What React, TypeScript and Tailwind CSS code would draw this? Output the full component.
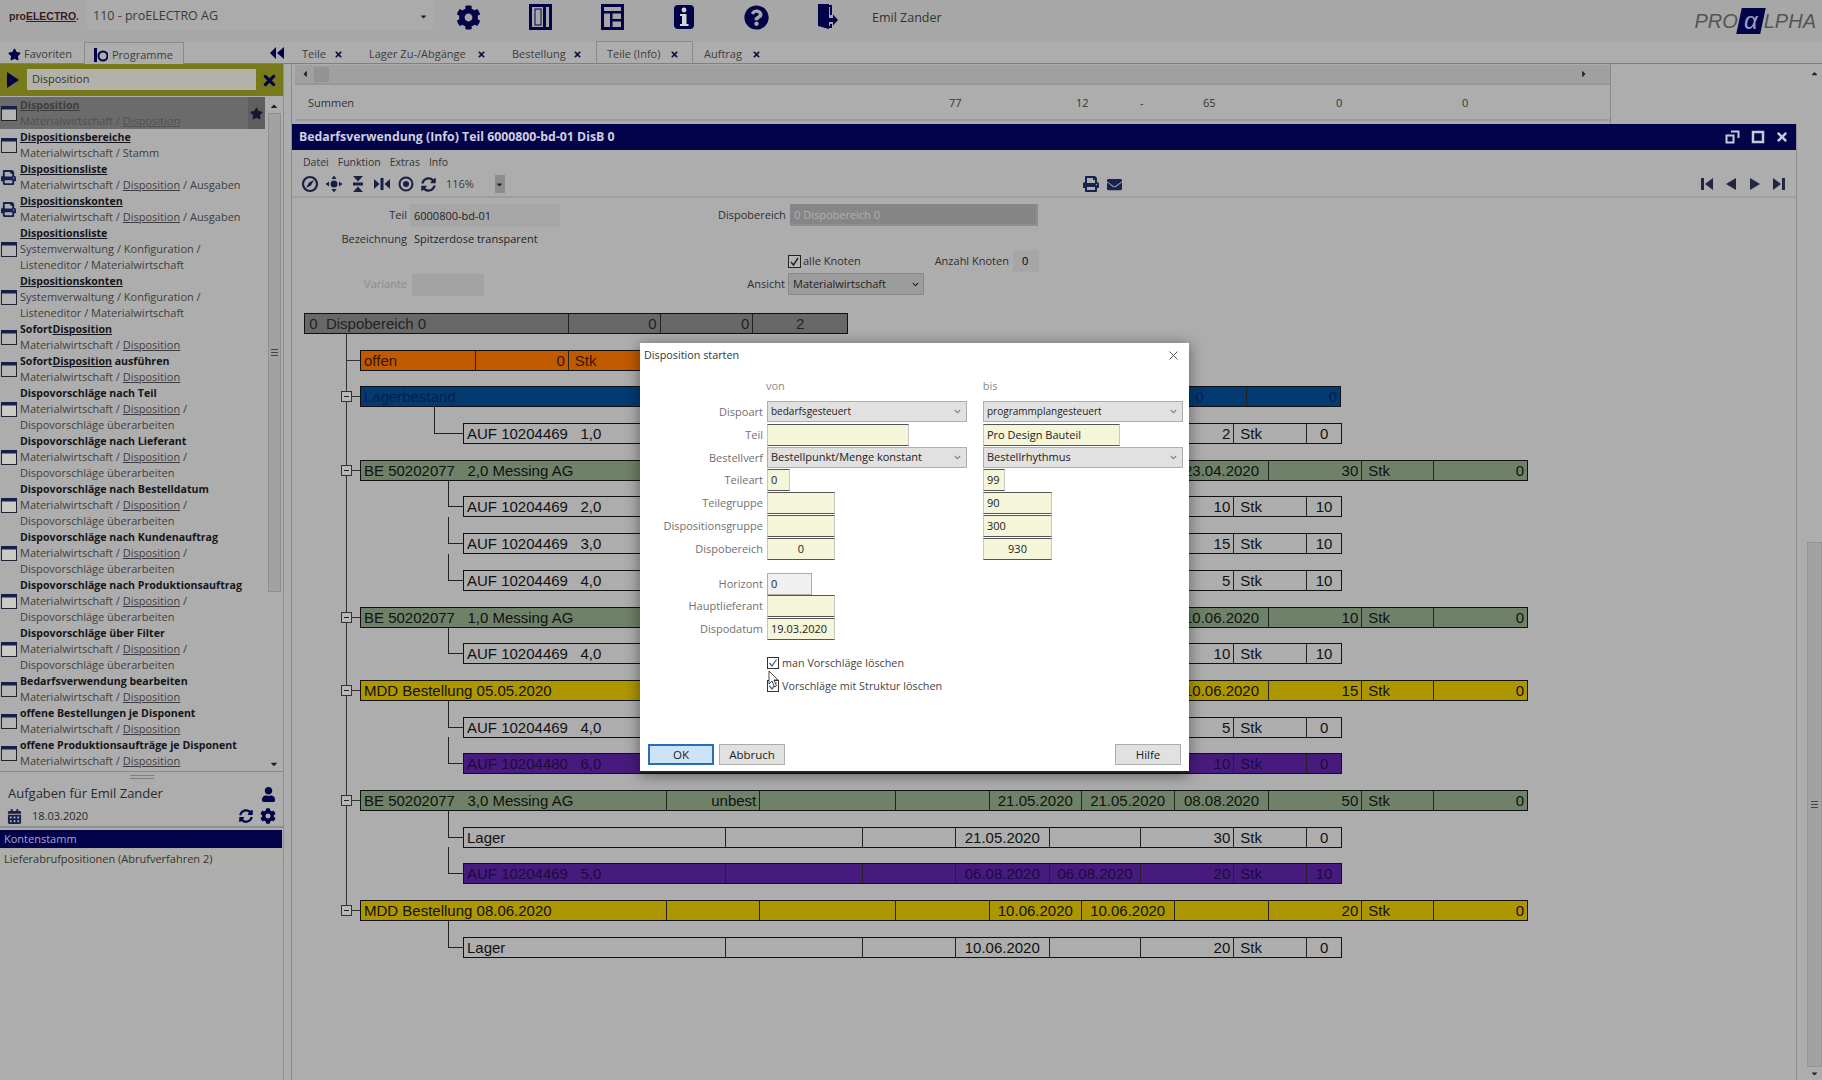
import React from "react";
import { FaCog, FaQuestionCircle, FaStar, FaTimes, FaUser, FaCalendarAlt, FaSyncAlt, FaPrint, FaEnvelope, FaCaretLeft, FaCaretRight, FaCaretDown, FaCaretUp, FaChevronDown } from "react-icons/fa";
import { X as LucideX } from "lucide-react";

const NAVY = "#03034a";

function U({ text }: { text: string }) {
  const parts = text.split(/(Disposition\w*)/);
  return (
    <>
      {parts.map((p, i) => (i % 2 === 1 ? <span key={i} className="underline">{p}</span> : <React.Fragment key={i}>{p}</React.Fragment>))}
    </>
  );
}

function WinIcon({ kind }: { kind: string }) {
  if (kind === "print") return <FaPrint className="text-[#15204f]" size={15} />;
  return (
    <svg width="16" height="15" viewBox="0 0 16 15">
      <rect x="0.5" y="0.5" width="15" height="14" fill={kind === "tint" ? "#c9cbc4" : "#b4b4b4"} stroke="#20232f" />
      <rect x="0" y="0" width="16" height="3.5" fill="#14204a" />
    </svg>
  );
}

const items: { t: string; l: string[]; k: string; sel?: boolean }[] = [
  { t: "Disposition", l: ["Materialwirtschaft / Disposition"], k: "win", sel: true },
  { t: "Dispositionsbereiche", l: ["Materialwirtschaft / Stamm"], k: "win" },
  { t: "Dispositionsliste", l: ["Materialwirtschaft / Disposition / Ausgaben"], k: "print" },
  { t: "Dispositionskonten", l: ["Materialwirtschaft / Disposition / Ausgaben"], k: "print" },
  { t: "Dispositionsliste", l: ["Systemverwaltung / Konfiguration /", "Listeneditor / Materialwirtschaft"], k: "win" },
  { t: "Dispositionskonten", l: ["Systemverwaltung / Konfiguration /", "Listeneditor / Materialwirtschaft"], k: "win" },
  { t: "SofortDisposition", l: ["Materialwirtschaft / Disposition"], k: "win" },
  { t: "SofortDisposition ausführen", l: ["Materialwirtschaft / Disposition"], k: "win" },
  { t: "Dispovorschläge nach Teil", l: ["Materialwirtschaft / Disposition /", "Dispovorschläge überarbeiten"], k: "tint" },
  { t: "Dispovorschläge nach Lieferant", l: ["Materialwirtschaft / Disposition /", "Dispovorschläge überarbeiten"], k: "tint" },
  { t: "Dispovorschläge nach Bestelldatum", l: ["Materialwirtschaft / Disposition /", "Dispovorschläge überarbeiten"], k: "tint" },
  { t: "Dispovorschläge nach Kundenauftrag", l: ["Materialwirtschaft / Disposition /", "Dispovorschläge überarbeiten"], k: "tint" },
  { t: "Dispovorschläge nach Produktionsauftrag", l: ["Materialwirtschaft / Disposition /", "Dispovorschläge überarbeiten"], k: "tint" },
  { t: "Dispovorschläge über Filter", l: ["Materialwirtschaft / Disposition /", "Dispovorschläge überarbeiten"], k: "tint" },
  { t: "Bedarfsverwendung bearbeiten", l: ["Materialwirtschaft / Disposition"], k: "win" },
  { t: "offene Bestellungen je Disponent", l: ["Materialwirtschaft / Disposition"], k: "win" },
  { t: "offene Produktionsaufträge je Disponent", l: ["Materialwirtschaft / Disposition"], k: "win" },
];

function Sidebar() {
  return (
    <div className="w-[292px] shrink-0 border-r border-[#8b8b8b]">
      <div className="w-[284px] h-full flex flex-col border-r border-[#8f8f8f]">
        <div className="w-[283px] h-[32px] bg-[#77791a] flex items-center">
          <svg width="14" height="18" viewBox="0 0 14 18" className="ml-[6px]"><path d="M1 1 L13 9 L1 17 Z" fill={NAVY} /></svg>
          <div className="ml-[7px] mb-[1px] w-[229px] h-[21px] bg-[#b2b2a8] text-[11px] leading-[20px] pl-[5px] text-[#333]">Disposition</div>
          <FaTimes className="ml-[5px]" size={17} color={NAVY} />
        </div>
        <div className="w-[283px] flex h-[675px] mt-[1px] border-b border-[#8a8a8a]">
          <div className="w-[265px] flex flex-col text-[11px] leading-[16px]">
            {items.map((it, i) => (
              <div key={i} className={"flex items-center relative " + (it.sel ? "bg-[#6b6b6b]" : "")}>
                <div className="w-[20px] pl-[1px] shrink-0 flex justify-start"><WinIcon kind={it.k} /></div>
                <div className="min-w-0 whitespace-nowrap">
                  <div className={"font-bold text-[10.6px] " + (it.sel ? "text-[#3e3e3e]" : "text-[#15151a]")}><U text={it.t} /></div>
                  {it.l.map((s, j) => (
                    <div key={j} className={it.sel ? "text-[#505050]" : "text-[#3d3d3d]"}><U text={s} /></div>
                  ))}
                </div>
                {it.sel && (
                  <div className="absolute right-0 top-0 h-full w-[17px] bg-[#5f5f5f] flex items-center justify-center">
                    <FaStar size={13} color="#17172e" />
                  </div>
                )}
              </div>
            ))}
          </div>
          <div className="w-[18px] flex flex-col items-center text-[#222]">
            <FaCaretUp size={10} className="mt-[4px]" />
            <div className="mt-[2px] w-[13px] h-[479px] bg-[#a2a2a2] border border-[#8f8f8f] flex items-center justify-center">
              <div className="w-[7px] h-[7px] border-y border-[#444] flex items-center"><div className="w-full h-px bg-[#444]" /></div>
            </div>
            <div className="flex-1" />
            <FaCaretDown size={10} className="mb-[2px]" />
          </div>
        </div>
        <div className="w-[283px] h-[10px] flex justify-center items-center">
          <div className="w-[24px] h-[4px] border-y border-[#7d7d7d]" />
        </div>
        <div className="w-[283px] h-[24px] flex items-center pl-[8px] pr-[7px] justify-between text-[13px] text-[#2a2a2a]">
          <span>Aufgaben für Emil Zander</span>
          <FaUser size={15} color={NAVY} />
        </div>
        <div className="w-[283px] h-[22px] flex items-center pl-[7px] pr-[7px] text-[11px] text-[#2a2a2a] border-b-2 border-[#8e8e8e]">
          <FaCalendarAlt size={15} color="#15204f" />
          <span className="ml-[10px]">18.03.2020</span>
          <div className="flex-1" />
          <FaSyncAlt size={14} color={NAVY} />
          <FaCog size={16} color={NAVY} className="ml-[7px]" />
        </div>
        <div className="w-[282px] h-[18px] mt-[2px] bg-[#03034a] text-[#a4a4dc] text-[11px] leading-[18px] pl-[4px]">Kontenstamm</div>
        <div className="w-[282px] h-[16px] mt-[3px] bg-[#afafa9] text-[#333] text-[11px] leading-[16px] pl-[4px] whitespace-nowrap">Lieferabrufpositionen (Abrufverfahren 2)</div>
      </div>
    </div>
  );
}

const GC = [0, 306, 399, 535, 629, 721, 814, 909, 1002, 1074, 1168];
const WC = [0, 262, 399, 492, 586, 678, 771, 844, 879];
const isDate = (s?: string) => !!s && /^\d\d\.\d\d\.\d{4}$/.test(s);

function Row({ left, width, bg, cols, texts, node, child, color = "#111", leftCols = [], centerCols = [] }: {
  left: number; width: number; bg: string; cols: number[]; texts: (string | undefined)[]; node?: boolean; child?: number; color?: string; leftCols?: number[]; centerCols?: number[];
}) {
  return (
    <div className="h-[21px] relative" style={{ marginLeft: left, width }}>
      {node && (
        <>
          <div className="absolute left-[-14px] top-[10px] w-[14px] h-px bg-[#333]" />
          <div className="absolute left-[-19px] top-[5px] w-[11px] h-[11px] border border-[#333] bg-[#b8b8b8] flex items-center justify-center">
            <div className="w-[5px] h-px bg-[#222]" />
          </div>
        </>
      )}
      {child !== undefined && (
        <>
          <div className="absolute top-[10px] h-px bg-[#222]" style={{ left: -child, width: child }} />
          <div className="absolute top-[-16px] h-[27px] w-px bg-[#222]" style={{ left: -child }} />
        </>
      )}
      <div className="flex h-full border border-[#111] text-[15px] leading-[19px] [font-family:'Liberation_Sans',sans-serif] whitespace-pre" style={{ background: bg, color }}>
        {cols.slice(0, -1).map((x, i) => {
          const wd = cols[i + 1] - x;
          const t = texts[i];
          const align = i === 0 ? "text-left" : t === "Stk" || leftCols.includes(i) ? "text-left pl-[6px]" : isDate(t) || wd < 60 || centerCols.includes(i) ? "text-center" : "text-right";
          return (
            <div key={i} className={"h-full overflow-hidden px-[3px] " + (i > 0 ? "border-l border-[#222] " : "") + align} style={{ width: wd }}>
              {t}
            </div>
          );
        })}
      </div>
    </div>
  );
}

const GREEN = "#6f8168";
const YEL = "#ad9600";
const PUR = "#471b7d";
const PLAIN = "#adadad";

function Tree() {
  const g = (a: string, d: string, q: string, z: string, d1 = "", d2 = "", mid = "") => [a, mid, "", "", d1, d2, d, q, "Stk", z];
  const w = (a: string, q: string, z: string, d1 = "", d2 = "") => [a, "", "", d1, d2, q, "Stk", z];
  const gc = { left: 56, width: 1168, cols: GC, node: true };
  const wc = { left: 159, width: 879, cols: WC };
  return (
    <div className="relative pl-[12px]">
      <div className="absolute left-[54px] top-[21px] h-[577px] w-px bg-[#333]" />
      <div className="flex flex-col gap-[15.7px]">
        <Row left={0} width={544} bg="#686868" cols={[0, 264, 356, 449, 544]} texts={["\u200a0  Dispobereich 0", "0", "0", "2"]} color="#222" centerCols={[3]} />
        <div className="relative">
          <div className="absolute left-[42px] top-[10px] w-[14px] h-px bg-[#333]" />
          <Row left={56} width={340} bg="#bf5a00" cols={[0, 115, 208, 340]} texts={["offen", "0", "Stk"]} color="#3a1500" />
        </div>
        <Row left={56} width={981} bg="#033a72" cols={[0, 829, 887, 981]} texts={["Lagerbestand", "0", "0"]} node color="#031f4a" leftCols={[1]} />
        <Row {...wc} child={29} bg={PLAIN} texts={w("AUF 10204469   1,0", "2", "0")} />
        <Row {...gc} bg={GREEN} texts={g("BE 50202077   2,0 Messing AG", "23.04.2020", "30", "0")} />
        <Row {...wc} child={15} bg={PLAIN} texts={w("AUF 10204469   2,0", "10", "10")} />
        <Row {...wc} child={15} bg={PLAIN} texts={w("AUF 10204469   3,0", "15", "10")} />
        <Row {...wc} child={15} bg={PLAIN} texts={w("AUF 10204469   4,0", "5", "10")} />
        <Row {...gc} bg={GREEN} texts={g("BE 50202077   1,0 Messing AG", "10.06.2020", "10", "0")} />
        <Row {...wc} child={15} bg={PLAIN} texts={w("AUF 10204469   4,0", "10", "10")} />
        <Row {...gc} bg={YEL} texts={g("MDD Bestellung 05.05.2020", "10.06.2020", "15", "0")} />
        <Row {...wc} child={15} bg={PLAIN} texts={w("AUF 10204469   4,0", "5", "0")} />
        <Row {...wc} child={15} bg={PUR} texts={w("AUF 10204480   6,0", "10", "0")} color="#1c0a40" />
        <Row {...gc} bg={GREEN} texts={g("BE 50202077   3,0 Messing AG", "08.08.2020", "50", "0", "21.05.2020", "21.05.2020", "unbest")} />
        <Row {...wc} child={15} bg={PLAIN} texts={w("Lager", "30", "0", "21.05.2020")} />
        <Row {...wc} child={15} bg={PUR} texts={w("AUF 10204469   5,0", "20", "10", "06.08.2020", "06.08.2020")} color="#1c0a40" />
        <Row {...gc} bg={YEL} texts={g("MDD Bestellung 08.06.2020", "", "20", "0", "10.06.2020", "10.06.2020")} />
        <Row {...wc} child={15} bg={PLAIN} texts={w("Lager", "20", "0", "10.06.2020")} />
      </div>
    </div>
  );
}

function Svg({ children, w = 16, h = 16 }: { children: React.ReactNode; w?: number; h?: number }) {
  return <svg width={w} height={h} viewBox={`0 0 ${w} ${h}`}>{children}</svg>;
}

function Ring({ children }: { children: React.ReactNode }) {
  return (
    <svg width="18" height="18" viewBox="0 0 18 18" fill="#1a1f44" stroke="none">
      {children}
    </svg>
  );
}

function Toolbar() {
  return (
    <div className="flex items-center gap-[6px]">
      <svg width="18" height="18" viewBox="0 0 18 18">
        <circle cx="9" cy="9" r="7" fill="none" stroke="#1a1f44" strokeWidth="2.2" />
        <path d="M13 5 L8 7.5 L5 13 L10 10.5 Z" fill="#1a1f44" />
      </svg>
      <Ring>
        <circle cx="9" cy="9" r="3.5" />
        <path d="M9 0.5 L11.5 4 H6.5 Z M9 17.5 L11.5 14 H6.5 Z M0.5 9 L4 6.5 V11.5 Z M17.5 9 L14 6.5 V11.5 Z" />
      </Ring>
      <Ring>
        <rect x="4" y="7.5" width="10" height="3" />
        <path d="M4 1 H14 L9 6.5 Z M4 17 H14 L9 11.5 Z" />
      </Ring>
      <Ring>
        <rect x="7.5" y="3" width="3" height="12" />
        <path d="M1 4 V14 L6.5 9 Z M17 4 V14 L11.5 9 Z" />
      </Ring>
      <Ring>
        <circle cx="9" cy="9" r="3" />
        <circle cx="9" cy="9" r="6.5" fill="none" stroke="#1a1f44" strokeWidth="2" />
      </Ring>
      <FaSyncAlt size={15} color="#1a1f44" />
    </div>
  );
}

function Window() {
  const label = "text-[11px] text-[#2d2d2d] whitespace-nowrap";
  return (
    <div className="w-[1505px] h-[956px] border-r border-[#8e8e8e] flex flex-col">
      <div className="h-[26px] bg-[#03034a] flex items-center pl-[7px] pr-[7px] shrink-0">
        <span className="text-[12.3px] font-bold text-[#cfcfe0]">Bedarfsverwendung (Info) Teil 6000800-bd-01 DisB 0</span>
        <div className="flex-1" />
        <Svg>
          <rect x="1.5" y="6.5" width="7" height="7" fill="none" stroke="#c8c8d8" strokeWidth="2" />
          <path d="M6 2.5 H13.5 V9" fill="none" stroke="#c8c8d8" strokeWidth="2" />
        </Svg>
        <div className="w-[9px]" />
        <Svg>
          <rect x="3" y="3" width="10" height="10" fill="none" stroke="#c8c8d8" strokeWidth="2.5" />
        </Svg>
        <div className="w-[9px]" />
        <FaTimes size={14} color="#c8c8d8" />
      </div>
      <div className="h-[23px] flex items-center gap-[9px] pl-[11px] text-[10.5px] text-[#333] shrink-0 pt-[2px]">
        <span>Datei</span><span>Funktion</span><span>Extras</span><span>Info</span>
      </div>
      <div className="h-[25px] flex items-center pl-[9px] pr-[9px] pb-[1px] border-b-2 border-[#9f9f9f] shrink-0">
        <Toolbar />
        <span className="ml-[10px] text-[11px] text-[#3a3a3a]">116%</span>
        <div className="ml-[21px] w-[10px] h-[18px] bg-[#8d8d8d] flex items-center justify-center"><FaCaretDown size={9} color="#222" /></div>
        <div className="w-[578px]" />
        <FaPrint size={16} color="#16234f" />
        <FaEnvelope size={15} color="#16234f" className="ml-[8px]" />
        <div className="flex-1" />
        <div className="flex items-center gap-[8px] text-[#22263f]">
          <Svg><path d="M2 2 H5 V14 H2 Z M14 2 V14 L6 8 Z" fill="currentColor" /></Svg>
          <Svg><path d="M13 2 V14 L3 8 Z" fill="currentColor" /></Svg>
          <Svg><path d="M3 2 V14 L13 8 Z" fill="currentColor" /></Svg>
          <Svg><path d="M14 2 H11 V14 H14 Z M2 2 V14 L10 8 Z" fill="currentColor" /></Svg>
        </div>
      </div>
      <div className="h-[115px] shrink-0 flex">
        <div className="w-[268px] shrink-0 flex flex-col">
          <div className="flex items-center mt-[6px] h-[23px]">
            <span className={label + " w-[115px] text-right"}>Teil</span>
            <div className="ml-[3px] w-[150px] h-[23px] bg-[#a6a6a6] text-[11px] leading-[23px] pl-[4px] text-[#222]">6000800-bd-01</div>
          </div>
          <div className="flex items-center mt-[1px] h-[22px]">
            <span className={label + " w-[115px] text-right"}>Bezeichnung</span>
            <span className="ml-[7px] text-[11px] text-[#222] whitespace-nowrap">Spitzerdose transparent</span>
          </div>
          <div className="flex items-center mt-[23px] h-[23px]">
            <span className="w-[115px] text-right text-[11px] text-[#8c8c8c]">Variante</span>
            <div className="ml-[5px] w-[72px] h-[22px] bg-[#a3a3a3]" />
          </div>
        </div>
        <div className="w-[230px] shrink-0 flex flex-col">
          <div className="flex items-center mt-[6px] h-[22px] ml-[158px]">
            <span className={label}>Dispobereich</span>
          </div>
          <div className="mt-[23px] flex items-center h-[23px]" />
          <div className="flex items-center justify-end mt-[1px] h-[22px] pr-[5px]">
            <span className={label}>Ansicht</span>
          </div>
        </div>
        <div className="flex flex-col">
          <div className="mt-[6px] w-[248px] h-[22px] bg-[#868686] text-[#b0b0b0] text-[11px] leading-[22px] pl-[4px] border-r-2 border-b-2 border-[#8e8e8e]">0 Dispobereich 0</div>
          <div className="mt-[24px] -ml-[2px] flex items-center h-[22px]">
            <div className="w-[13px] h-[13px] border border-[#222] flex items-center justify-center bg-[#b5b5b5]">
              <svg width="11" height="11" viewBox="0 0 11 11"><path d="M2 6 L4.5 9 L9 2" fill="none" stroke="#222" strokeWidth="1.4" /></svg>
            </div>
            <span className={label + " ml-[2px]"}>alle Knoten</span>
            <span className={label + " ml-[74px]"}>Anzahl Knoten</span>
            <div className="ml-[4px] w-[26px] h-[22px] bg-[#a6a6a6] text-[11px] leading-[22px] pl-[9px]">0</div>
          </div>
          <div className="mt-[1px] -ml-[2px] w-[136px] h-[22px] bg-[#9c9c9c] border border-[#8a8a8a] text-[11px] leading-[20px] pl-[4px] text-[#222] flex items-center justify-between pr-[4px]">
            <span>Materialwirtschaft</span>
            <FaChevronDown size={7} color="#222" />
          </div>
        </div>
      </div>
      <Tree />
    </div>
  );
}

function DLabel({ children }: { children: React.ReactNode }) {
  return <div className="w-[123px] text-right text-[11px] leading-[21px] text-[#707070] whitespace-nowrap">{children}</div>;
}

function DSelect({ text, small }: { text: string; small?: boolean }) {
  return (
    <div className={"w-[200px] h-[21px] bg-[#e1e1e1] border border-[#adadad] flex items-center justify-between pl-[3px] pr-[5px] text-[#222] " + (small ? "text-[10px]" : "text-[11px]")}>
      <span>{text}</span>
      <FaChevronDown size={7} color="#777" />
    </div>
  );
}

function DInput({ w, text, center, plain }: { w: number; text?: string; center?: boolean; plain?: boolean }) {
  return (
    <div
      className={"h-[22px] text-[11px] leading-[20px] text-[#222] border " + (plain ? "bg-[#f0f0f0] border-[#adadad] " : "bg-[#f5f5d9] border-[#555] border-x-[#c9c9c0] ") + (center ? "text-center" : "pl-[3px]")}
      style={{ width: w }}
    >
      {text}
    </div>
  );
}

function DRow({ label, a, b }: { label?: string; a: React.ReactNode; b?: React.ReactNode }) {
  return (
    <div className="flex h-[22.8px] items-start">
      <DLabel>{label}</DLabel>
      <div className="ml-[4px] w-[216px]">{a}</div>
      {b}
    </div>
  );
}

function Dialog() {
  return (
    <div className="absolute left-[640px] top-[343px] w-[549px] h-[430px] bg-white shadow-[0_2px_14px_rgba(0,0,0,0.45)] border-b-2 border-[#222]">
      <div className="flex items-center justify-between h-[24px] pl-[4px] pr-[8px]">
        <span className="text-[10.8px] text-[#333]">Disposition starten</span>
        <LucideX size={15} color="#333" strokeWidth={1.3} />
      </div>
      <div className="flex mt-[11px] h-[20px] text-[11px] text-[#8a8a8a]">
        <span className="ml-[126px]">von</span>
        <span className="ml-[198px]">bis</span>
      </div>
      <div className="mt-[3px]">
        <DRow label="Dispoart" a={<DSelect small text="bedarfsgesteuert" />} b={<DSelect small text="programmplangesteuert" />} />
        <DRow label="Teil" a={<DInput w={142} />} b={<DInput w={137} text="Pro Design Bauteil" />} />
        <DRow label="Bestellverf" a={<DSelect text="Bestellpunkt/Menge konstant" />} b={<DSelect text="Bestellrhythmus" />} />
        <DRow label="Teileart" a={<DInput w={23} text="0" />} b={<DInput w={22} text="99" />} />
        <DRow label="Teilegruppe" a={<DInput w={68} />} b={<DInput w={69} text="90" />} />
        <DRow label="Dispositionsgruppe" a={<DInput w={68} />} b={<DInput w={69} text="300" />} />
        <DRow label="Dispobereich" a={<DInput w={68} text="0" center />} b={<DInput w={69} text="930" center />} />
      </div>
      <div className="mt-[12px]">
        <DRow label="Horizont" a={<DInput w={45} text="0" plain />} />
        <DRow label="Hauptlieferant" a={<DInput w={68} />} />
        <DRow label="Dispodatum" a={<DInput w={68} text="19.03.2020" />} />
      </div>
      <div className="ml-[127px] mt-[16px] flex flex-col gap-[10px] text-[10.8px] text-[#444] relative">
        {["man Vorschläge löschen", "Vorschläge mit Struktur löschen"].map((t, i) => (
          <div key={i} className="flex items-center h-[13px]">
            <div className="w-[12px] h-[12px] border border-[#333] flex items-center justify-center">
              <svg width="10" height="10" viewBox="0 0 10 10"><path d="M1.5 5 L4 8 L8.5 1.5" fill="none" stroke="#3c5c88" strokeWidth="1.2" /></svg>
            </div>
            <span className="ml-[3px]">{t}</span>
          </div>
        ))}
        <svg className="absolute left-[1px] top-[13px]" width="12" height="18" viewBox="0 0 12 18">
          <path d="M1 1 V14 L4 11 L6.5 17 L8.5 16 L6 10 L10 10 Z" fill="#fff" stroke="#333" strokeWidth="0.9" />
        </svg>
      </div>
      <div className="absolute left-[8px] right-[8px] bottom-[6px] flex text-[11.5px] text-[#222]">
        <div className="w-[66px] h-[21px] bg-[#cce4f7] border-2 border-[#2a6fad] flex items-center justify-center">OK</div>
        <div className="ml-[5px] w-[66px] h-[21px] bg-[#e1e1e1] border border-[#adadad] flex items-center justify-center">Abbruch</div>
        <div className="flex-1" />
        <div className="w-[66px] h-[21px] bg-[#e1e1e1] border border-[#adadad] flex items-center justify-center">Hilfe</div>
      </div>
    </div>
  );
}

function Tab({ text, active, w, gap, pl }: { text: string; active?: boolean; w: number; gap: number; pl: number }) {
  return (
    <div className={"h-[22px] pt-[4px] flex items-center text-[11px] text-[#3c3c3c] whitespace-nowrap " + (active ? "bg-[#adadad] border-x border-t border-[#8a8a8a]" : "")} style={{ width: w, paddingLeft: pl }}>
      <span>{text}</span>
      <FaTimes size={9} color="#15153e" style={{ marginLeft: gap }} />
    </div>
  );
}

function TopIcon({ children }: { children: React.ReactNode }) {
  return <div className="w-[72px] h-[42px] flex items-center justify-center">{children}</div>;
}

export default function App() {
  return (
    <div className="relative w-[1822px] h-[1080px] overflow-hidden bg-[#adadad] flex flex-col [font-family:'Open_Sans',sans-serif]">
      <div className="h-[42px] flex items-start bg-[#a7a7a7] shrink-0">
        <div className="w-[87px] h-[34px] flex items-center pl-[9px] text-[10.5px] font-bold text-[#3b1a22] whitespace-nowrap [font-family:'Liberation_Sans',sans-serif]">
          pro<span className="underline">ELECTRO</span><span className="text-[#7a1010]">.</span>
        </div>
        <div className="w-[346px] h-[30px] pt-[3px] bg-[#ababab] flex items-center pl-[6px] pr-[5px] justify-between text-[12.5px] text-[#3a3a3a]">
          <span>110 - proELECTRO AG</span>
          <FaCaretDown size={9} color="#222" />
        </div>
        <div className="ml-[-1px] flex h-[34px] items-center">
          <TopIcon><FaCog size={25} color={NAVY} /></TopIcon>
          <TopIcon>
            <svg width="23" height="26" viewBox="0 0 23 26">
              <rect x="1.5" y="1.5" width="20" height="23" fill="none" stroke={NAVY} strokeWidth="3" />
              <rect x="14" y="2" width="3" height="22" fill={NAVY} />
              <rect x="6" y="5" width="6" height="16" fill="none" stroke={NAVY} strokeWidth="1" />
            </svg>
          </TopIcon>
          <TopIcon>
            <svg width="23" height="26" viewBox="0 0 23 26">
              <rect x="1.5" y="1.5" width="20" height="23" fill="none" stroke={NAVY} strokeWidth="3" />
              <rect x="2" y="7" width="19" height="2.5" fill={NAVY} />
              <rect x="9" y="8" width="2.5" height="16" fill={NAVY} />
              <rect x="11" y="15" width="10" height="2.5" fill={NAVY} />
            </svg>
          </TopIcon>
          <TopIcon>
            <svg width="20" height="26" viewBox="0 0 20 26">
              <rect x="0" y="1" width="20" height="24" rx="4" fill={NAVY} />
              <circle cx="10" cy="6" r="2.4" fill="#d4d4d4" />
              <path d="M6 10 H12.5 V20 H14.5 V22 H6 V20 H8 V12 H6 Z" fill="#d4d4d4" />
            </svg>
          </TopIcon>
          <TopIcon><FaQuestionCircle size={25} color={NAVY} /></TopIcon>
          <TopIcon>
            <svg width="22" height="28" viewBox="0 0 22 28">
              <path d="M1 1 H12 V26 L1 23 Z" fill={NAVY} />
              <path d="M9 3 H14 V12 M14 21 V24 H11" fill="none" stroke={NAVY} strokeWidth="2" />
              <path d="M12 15 H16 V11.5 L21 17 L16 22.5 V19 H12 Z" fill={NAVY} />
            </svg>
          </TopIcon>
        </div>
        <span className="ml-[8px] mt-[9px] text-[12.5px] text-[#333] whitespace-nowrap">Emil Zander</span>
        <div className="flex-1" />
        <div className="flex items-center mt-[6px] mr-[6px] text-[20px] italic text-[#555] [font-family:'Liberation_Sans',sans-serif]">
          <span>PRO</span>
          <span className="mx-[1px] w-[24px] h-[26px] bg-[#03034a] -skew-x-12 flex items-center justify-center"><span className="skew-x-12 text-[#9aa0c0] text-[24px] leading-none">α</span></span>
          <span>LPHA</span>
        </div>
      </div>
      <div className="h-[22px] flex shrink-0 border-b border-[#7f7f7f]">
        <div className="w-[292px] flex items-center">
          <div className="w-[84px] pt-[4px] flex items-center pl-[8px] text-[11px] text-[#3c3c3c]"><FaStar size={13} color={NAVY} /><span className="ml-[3px]">Favoriten</span></div>
          <div className="w-[100px] h-[22px] pt-[4px] border-x border-t border-[#8a8a8a] bg-[#adadad] flex items-center pl-[8px] text-[11px] text-[#3c3c3c]">
            <svg width="15" height="16" viewBox="0 0 15 16"><rect x="1" y="1" width="3" height="14" fill={NAVY} /><circle cx="10" cy="9" r="4.5" fill="none" stroke={NAVY} strokeWidth="2" /></svg>
            <span className="ml-[4px]">Programme</span>
          </div>
          <svg width="16" height="16" viewBox="0 0 16 16" className="ml-[85px]"><path d="M7 2 V14 L1 8 Z M15 2 V14 L8 8 Z" fill={NAVY} /></svg>
        </div>
        <div className="flex items-end">
          <Tab text="Teile" w={67} pl={10} gap={8} />
          <Tab text="Lager Zu-/Abgänge" w={143} pl={10} gap={11} />
          <Tab text="Bestellung" w={94} pl={10} gap={7} />
          <Tab text="Teile (Info)" active w={97} pl={10} gap={10} />
          <Tab text="Auftrag" w={70} pl={11} gap={10} />
        </div>
      </div>
      <div className="flex flex-1 min-h-0 relative">
        <Sidebar />
        <div className="flex-1 flex flex-col min-w-0">
          <div className="w-[1319px] h-[60px] border-r border-[#8a8a8a] pl-[3px] shrink-0">
            <div className="h-[20px] mt-[1px] bg-[#a0a0a0] flex items-center justify-between pl-[5px] pr-[21px] border-b-2 border-[#979797]">
              <div className="flex items-center"><FaCaretLeft size={10} color="#222" /><div className="ml-[4px] w-[15px] h-[15px] bg-[#939393]" /></div>
              <FaCaretRight size={10} color="#222" />
            </div>
            <div className="relative h-[36px] pt-[3px] flex items-center text-[11px] text-[#333] pl-[13px] border-b-2 border-[#9b9b9b]">
              Summen
              {([["77", 654], ["12", 781], ["-", 845], ["65", 908], ["0", 1041], ["0", 1167]] as [string, number][]).map(([t, x], i) => (
                <span key={i} className="absolute" style={{ left: x }}>{t}</span>
              ))}
            </div>
          </div>
          <Window />
        </div>
        <div className="absolute right-0 top-0 bottom-0 w-[16px] flex flex-col items-center">
          <FaCaretUp size={9} color="#222" className="mt-[5px]" />
          <div className="mt-[464px] w-[15px] h-[525px] bg-[#a2a2a2] border border-[#959595] flex items-center justify-center">
            <div className="w-[7px] h-[7px] border-y border-[#444] flex items-center"><div className="w-full h-px bg-[#444]" /></div>
          </div>
          <div className="flex-1" />
          <FaCaretDown size={9} color="#222" className="mb-[2px]" />
        </div>
      </div>
      <Dialog />
    </div>
  );
}
